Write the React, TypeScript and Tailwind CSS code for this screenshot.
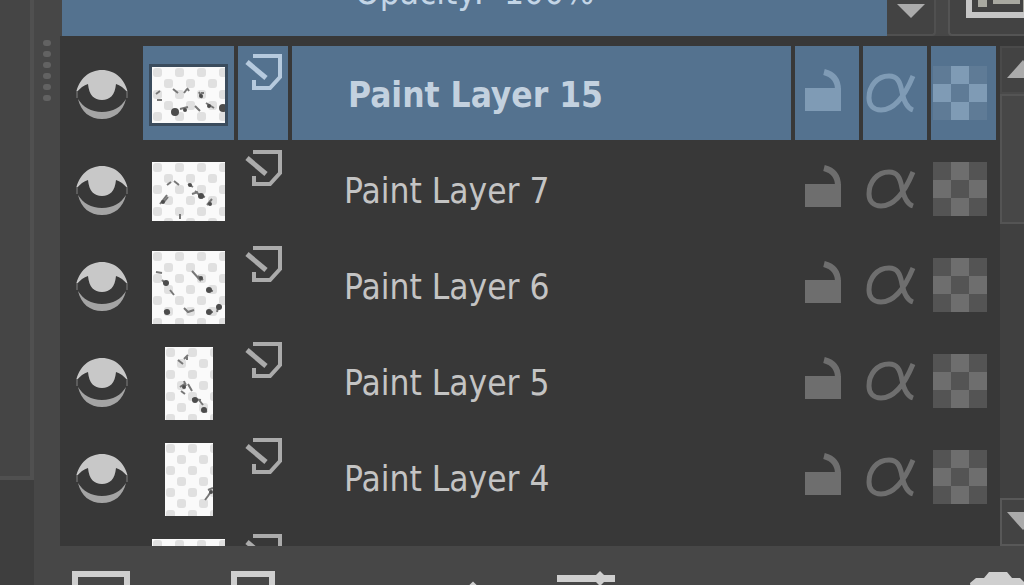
import React from 'react';

type Layer = {
  id: number;
  name: string;
  thumb: { w: number; h: number; marks: string; dots: number[][] };
};

const LAYERS: Layer[] = [
  {
    id: 15,
    name: 'Paint Layer 15',
    thumb: {
      w: 73, h: 56,
      marks: 'M4 27l4-3M5 33h5M21 22l5 4M32 26l3-4M35 21l2 3M47 25l3 6M28 42l8-2M43 39l5 5M54 36l8 5M49 26h3',
      dots: [[23, 45, 4], [71, 41, 4], [57, 39, 2], [33, 43, 2], [49, 29, 2]],
    },
  },
  {
    id: 7,
    name: 'Paint Layer 7',
    thumb: {
      w: 73, h: 59,
      marks: 'M8 42l7-9M12 40l4-5M15 23l4-3M22 19l5 4M36 22l5 3M40 32l6-2M47 33l6 2M55 43l5-6M28 52v5M43 29l8 7',
      dots: [[11, 40, 2], [49, 34, 3], [38, 23, 2], [58, 42, 2]],
    },
  },
  {
    id: 6,
    name: 'Paint Layer 6',
    thumb: {
      w: 73, h: 73,
      marks: 'M4 21l6 1M10 29l5 5M18 39l4 5M40 20l9 10M46 25l5 4M55 39l6 1M32 57l4 4 6-2M12 60l6 2M67 53l-2 8M56 61h5',
      dots: [[14, 32, 3], [49, 27, 2], [57, 39, 3], [15, 61, 3], [57, 61, 3], [67, 56, 3]],
    },
  },
  {
    id: 5,
    name: 'Paint Layer 5',
    thumb: {
      w: 48, h: 73,
      marks: 'M13 13l5 4M19 12l4-4M22 10v3M15 40l6-4M19 34l2 5M23 37l4 7M16 44l4 3M27 52l9 1M34 53l4 5M38 63l4 2',
      dots: [[30, 53, 3], [39, 63, 3], [19, 40, 2]],
    },
  },
  {
    id: 4,
    name: 'Paint Layer 4',
    thumb: { w: 48, h: 73, marks: 'M43 47l5-2M40 57l3-4M45 50l-2 3', dots: [[46, 49, 2]] },
  },
  { id: 3, name: 'Paint Layer 3', thumb: { w: 73, h: 73, marks: '', dots: [] } },
];

function EyeIcon() {
  return (
    <svg viewBox="0 0 52 50" className="h-[50px] w-[52px]">
      <path d="M0 23C3 9 13 0 26 0s23 9 26 23c-4-5-8-8-12-9-1 11-6 16-14 16s-13-5-14-16C8 15 4 18 0 23z" fill="#c8c8c8" />
      <path d="M2 29c5 8 13 13 24 13s19-5 24-13c-3 13-12 20-24 20S5 42 2 29z" fill="#a4a4a4" />
      <path d="M1 21v7M51 21v7" stroke="#5c5c5c" strokeWidth="2" />
    </svg>
  );
}

function PaintTypeIcon({ color }: { color: string }) {
  return (
    <svg viewBox="0 0 38 38" className="h-[38px] w-[38px]" fill="none" stroke={color} strokeWidth="4">
      <path d="M8 2h27v21L25 34H9v-8" />
      <path d="M2 8l19 16" strokeWidth="5" />
    </svg>
  );
}

function LockIcon() {
  return (
    <svg viewBox="0 0 36 44" className="h-[44px] w-[36px]">
      <path d="M0 19h36v23H0z" fill="currentColor" />
      <path d="M19 3c8 2 14 7 14 18" fill="none" stroke="currentColor" strokeWidth="6" />
    </svg>
  );
}

function AlphaIcon() {
  return (
    <svg viewBox="0 0 50 40" className="h-[40px] w-[50px]" fill="none" stroke="currentColor" strokeWidth="5">
      <path d="M47 3C40 20 29 37 15 37 7 37 3 32 3 25 3 13 11 3 23 3c8 0 11 5 13 16 2 10 5 16 11 18" />
    </svg>
  );
}

function CheckerIcon({ dim }: { dim: string }) {
  return (
    <svg viewBox="0 0 54 54" className="h-[54px] w-[54px]">
      <path d="M0 0h54v54H0z" fill={dim} />
      <path d="M18 0h18v18H18zM0 18h18v18H0zM36 18h18v18H36zM18 36h18v18H18z" fill="currentColor" />
    </svg>
  );
}

function Thumbnail({ layer }: { layer: Layer }) {
  const { w, h, marks, dots } = layer.thumb;
  const pattern = `checks-${layer.id}`;
  return (
    <svg width={w} height={h} viewBox={`0 0 ${w} ${h}`}>
      <defs>
        <pattern id={pattern} width="22" height="22" patternUnits="userSpaceOnUse">
          <path d="M0 0h22v22H0z" fill="#fafafa" />
          <rect x="12" y="12" width="9" height="9" rx="3" fill="#e0e0e0" />
          <rect x="1" y="1" width="9" height="9" rx="3" fill="#e0e0e0" />
        </pattern>
      </defs>
      <rect width={w} height={h} fill={`url(#${pattern})`} />
      <path d={marks} fill="none" stroke="#777" strokeWidth="2" />
      {dots.map(([x, y, r]) => (
        <circle key={`${x}-${y}`} cx={x} cy={y} r={r} fill="#4c4c4c" />
      ))}
    </svg>
  );
}

function LayerRow({ layer, selected }: { layer: Layer; selected: boolean }) {
  const cell = selected ? 'bg-[#54728f]' : '';
  const toggle = selected ? 'bg-[#54728f] text-[#7f9bb5]' : 'text-[#6e6e6e]';
  return (
    <li className="flex h-24 shrink-0 gap-1 pb-[2px]">
      <button aria-label={`Show ${layer.name}`} className="flex w-[79px] items-center justify-center pt-1 pl-1">
        <EyeIcon />
      </button>
      <div className={`flex w-[91px] items-center justify-center pt-1 ${cell}`}>
        <div className={selected ? 'outline-3 outline-[#3b4c5d]' : ''}>
          <Thumbnail layer={layer} />
        </div>
      </div>
      <div className={`flex w-[50px] justify-center pt-2 pl-[2px] ${cell}`}>
        <PaintTypeIcon color={selected ? '#b6cade' : '#ababab'} />
      </div>
      <div className={`flex flex-1 items-center pt-1 text-[35px] ${selected ? 'pl-14 font-bold text-[#c3d1df]' : 'pl-[52px] text-[#c4c4c4]'} ${cell}`}>
        <span className="whitespace-nowrap">{layer.name}</span>
      </div>
      <button aria-label={`Lock ${layer.name}`} className={`flex w-16 justify-center pt-[23px] pr-2 ${toggle}`}>
        <LockIcon />
      </button>
      <button aria-label={`Alpha lock ${layer.name}`} className={`flex w-16 justify-center pt-[27px] pr-2 ${toggle}`}>
        <AlphaIcon />
      </button>
      <button aria-label={`Inherit alpha ${layer.name}`} className={`flex w-[65px] items-center justify-center pr-2 ${toggle}`}>
        <CheckerIcon dim={selected ? '#5f7b96' : '#545454'} />
      </button>
    </li>
  );
}

function OpacityBar() {
  return (
    <div className="flex h-9 shrink-0 pl-[2px]">
      <label className="relative flex h-9 flex-1 items-end justify-center overflow-hidden bg-[#54728f] pb-6 text-[35px] leading-10 text-[#c3d5e6]">
        <span className="whitespace-pre">Opacity:  100%</span>
        <input type="range" min={0} max={100} defaultValue={100} className="absolute inset-0 opacity-0" />
      </label>
      <button aria-label="Decrease opacity" className="flex w-[49px] justify-center rounded-br border-r-2 border-b-2 border-[#505050] bg-[#434343] pt-1">
        <svg viewBox="0 0 28 14" className="h-[14px] w-7">
          <path d="M0 0h28L14 14z" fill="#ababab" />
        </svg>
      </button>
      <button aria-label="Layer view options" className="ml-3 flex w-[76px] overflow-hidden rounded-bl border-b-2 border-l-2 border-[#545454] bg-[#434343] pl-4">
        <svg viewBox="0 0 60 20" className="h-5 w-[60px] shrink-0">
          <path d="M0 0h60v18H0z" fill="#c6c6c6" />
          <path d="M6 0h54v12H6z" fill="#424242" />
          <path d="M12 0h9v7h-9zM27 0h27v4H27zM57 0h3v12h-3z" fill="#a8a8a0" />
        </svg>
      </button>
    </div>
  );
}

function ScrollBar() {
  return (
    <div className="flex w-6 shrink-0 flex-col overflow-hidden bg-[#404040]">
      <button aria-label="Scroll up" className="flex h-12 w-12 border-2 border-[#4a4a4a] bg-[#434343] pt-3 pl-[5px]">
        <svg viewBox="0 0 32 18" className="h-[18px] w-8">
          <path d="M0 18h32L16 0z" fill="#ababab" />
        </svg>
      </button>
      <div className="h-[130px] w-12 border-2 border-[#545454] bg-[#474747]" />
      <button aria-label="Scroll down" className="mt-auto flex h-12 w-12 border-2 border-[#585858] bg-[#434343] pt-3 pl-[5px]">
        <svg viewBox="0 0 32 18" className="h-[18px] w-8">
          <path d="M0 0h32L16 18z" fill="#ababab" />
        </svg>
      </button>
    </div>
  );
}

function Toolbar() {
  return (
    <div className="flex h-[39px] shrink-0 items-start overflow-hidden pt-[25px] pl-3 text-[#cfcfcf]">
      <button aria-label="Add layer" className="w-[58px]">
        <svg viewBox="0 0 58 40" className="h-10 w-[58px]">
          <path d="M3 3h52v34H3z" fill="none" stroke="currentColor" strokeWidth="6" />
        </svg>
      </button>
      <button aria-label="Duplicate layer" className="ml-[101px] w-11">
        <svg viewBox="0 0 44 40" className="h-10 w-11">
          <path d="M3 3h38v34H3z" fill="none" stroke="currentColor" strokeWidth="6" />
        </svg>
      </button>
      <button aria-label="Move layer up" className="ml-[178px] w-10">
        <svg viewBox="0 0 40 40" className="h-10 w-10">
          <path d="M2 31l18-17 18 17" fill="none" stroke="currentColor" strokeWidth="5" />
        </svg>
      </button>
      <button aria-label="Layer properties" className="ml-16 w-[58px]">
        <svg viewBox="0 0 58 40" className="h-10 w-[58px]">
          <path d="M0 4h39l4-4 4 4h11v7H47l-4 4-4-4H0z" fill="currentColor" />
        </svg>
      </button>
      <button aria-label="Delete layer" className="ml-auto w-[54px]">
        <svg viewBox="0 0 54 40" className="h-10 w-[54px]">
          <path d="M0 12l6-5h8l5-6h18l5 6h8l4 4v29H4z" fill="currentColor" />
        </svg>
      </button>
    </div>
  );
}

export default function App() {
  const [selectedId] = React.useState(15);

  return (
    <div className="flex h-screen overflow-hidden bg-[#474747] font-['DejaVu_Sans_Condensed','DejaVu_Sans',sans-serif]">
      <div className="flex w-[34px] shrink-0 flex-col">
        <div className="flex-1 border-r-4 border-b-4 border-[#505050] bg-[#454545]" />
        <div className="h-[105px] bg-[#3e3e3e]" />
      </div>
      <div className="flex w-[26px] shrink-0 flex-col items-center gap-[5px] pt-10">
        {Array.from({ length: 6 }, (_, i) => (
          <span key={i} className="h-[6px] w-2 rounded-full bg-[#626262]" />
        ))}
      </div>
      <main className="flex min-w-0 flex-1 flex-col">
        <OpacityBar />
        <section className="flex min-h-0 flex-1 bg-[#383838] pt-[10px]">
          <ul className="flex flex-1 flex-col overflow-hidden pr-1">
            {LAYERS.map(layer => (
              <LayerRow key={layer.id} layer={layer} selected={layer.id === selectedId} />
            ))}
          </ul>
          <ScrollBar />
        </section>
        <Toolbar />
      </main>
    </div>
  );
}
